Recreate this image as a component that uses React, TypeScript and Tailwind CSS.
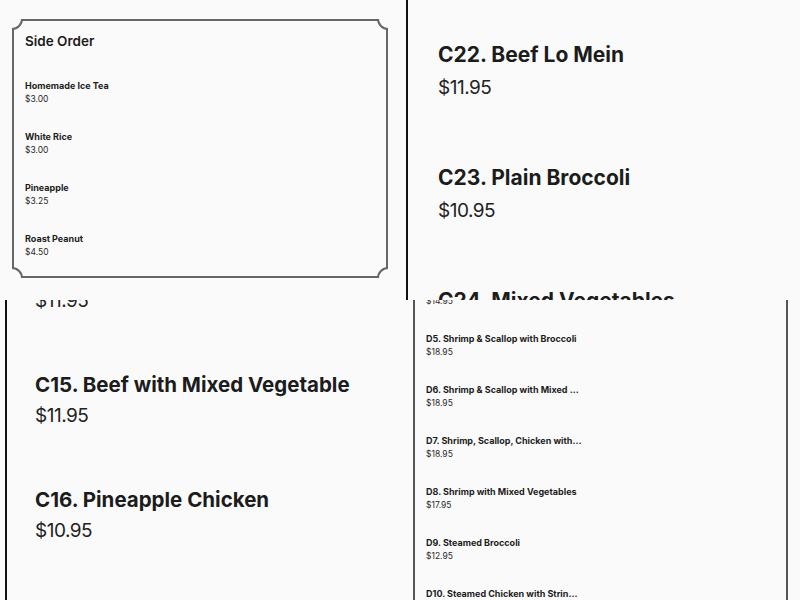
const font = { fontFamily: 'Inter, "Noto Sans", sans-serif' };

type Item = { name: string; price: string };

const sideOrder: Item[] = [
  { name: 'Homemade Ice Tea', price: '$3.00' },
  { name: 'White Rice', price: '$3.00' },
  { name: 'Pineapple', price: '$3.25' },
  { name: 'Roast Peanut', price: '$4.50' },
];

const beef: Item[] = [
  { name: 'C22. Beef Lo Mein', price: '$11.95' },
  { name: 'C23. Plain Broccoli', price: '$10.95' },
  { name: 'C24. Mixed Vegetables', price: '$10.95' },
];

const chicken: Item[] = [
  { name: 'C14. Beef with Broccoli', price: '$11.95' },
  { name: 'C15. Beef with Mixed Vegetable', price: '$11.95' },
  { name: 'C16. Pineapple Chicken', price: '$10.95' },
];

const diet: Item[] = [
  { name: 'D4. Shrimp with Broccoli', price: '$14.95' },
  { name: 'D5. Shrimp & Scallop with Broccoli', price: '$18.95' },
  { name: 'D6. Shrimp & Scallop with Mixed Vegetables', price: '$18.95' },
  { name: 'D7. Shrimp, Scallop, Chicken with Broccoli', price: '$18.95' },
  { name: 'D8. Shrimp with Mixed Vegetables', price: '$17.95' },
  { name: 'D9. Steamed Broccoli', price: '$12.95' },
  { name: 'D10. Steamed Chicken with String Beans', price: '$12.95' },
];

function Corner({ pos }: { pos: string }) {
  return (
    <div
      className={`absolute w-[22px] h-[22px] rounded-full border-2 border-[#666] bg-[#fafafa] ${pos}`}
    />
  );
}

function SideOrderTile() {
  return (
    <div className="h-[300px] overflow-hidden bg-[#fafafa] pt-[19px] pl-[12px]">
      <div className="relative w-[376px] h-[259px] overflow-hidden">
        <div className="w-full h-full border-2 border-[#666] pt-[10px] pl-[11px]">
          <h2 className="text-[13.5px] leading-[20px] font-semibold text-[#1c1c1c]">Side Order</h2>
          <div className="mt-[28px] flex flex-col">
            {sideOrder.map((it) => (
              <div key={it.name} className="h-[51px]">
                <div className="text-[9px] leading-[13px] font-bold text-[#1c1c1c]">{it.name}</div>
                <div className="text-[8.5px] leading-[14px] text-[#2a2a2a]">{it.price}</div>
              </div>
            ))}
          </div>
        </div>
        <Corner pos="-top-[11px] -left-[11px]" />
        <Corner pos="-top-[11px] -right-[11px]" />
        <Corner pos="-bottom-[11px] -left-[11px]" />
        <Corner pos="-bottom-[11px] -right-[11px]" />
      </div>
    </div>
  );
}

type BigProps = {
  items: Item[];
  lineLeft: string;
  textLeft: string;
  first: string;
  step: string;
  titleSize: string;
  priceLead: string;
};

function BigTile({ items, lineLeft, textLeft, first, step, titleSize, priceLead }: BigProps) {
  return (
    <div className={`h-[300px] overflow-hidden bg-[#fafafa] ${lineLeft}`}>
      <div className={`h-[300px] border-l-2 border-[#111] flex flex-col ${textLeft}`}>
        {items.map((it, i) => (
          <div key={it.name} className={`${step} shrink-0 ${i === 0 ? first : ''}`}>
            <div className={`${titleSize} leading-[30px] font-bold text-[#1c1c1c] whitespace-nowrap`}>{it.name}</div>
            <div className={`text-[19px] tracking-[-0.5px] text-[#222] ${priceLead}`}>{it.price}</div>
          </div>
        ))}
      </div>
    </div>
  );
}

function DietTile() {
  return (
    <div className="h-[300px] overflow-hidden bg-[#fafafa] pl-[13px]">
      <div className="w-[375px] h-[300px] border-x-2 border-[#555] pl-[11px] flex flex-col">
        {diet.map((it, i) => (
          <div key={it.name} className={`h-[51px] shrink-0 ${i === 0 ? '-mt-[19px]' : ''}`}>
            <div className="w-[156px] truncate text-[9px] leading-[13px] font-bold text-[#1c1c1c]">{it.name}</div>
            <div className="text-[8.5px] leading-[14px] text-[#2a2a2a]">{it.price}</div>
          </div>
        ))}
      </div>
    </div>
  );
}

export default function App() {
  return (
    <div style={font} className="w-[800px] h-[600px] grid grid-cols-2 grid-rows-2 bg-[#fafafa]">
      <SideOrderTile />
      <BigTile
        items={beef}
        lineLeft="pl-[6px]"
        textLeft="pl-[30px]"
        first="mt-[40px]"
        step="h-[123px]"
        titleSize="text-[21px]"
        priceLead="leading-[36px]"
      />
      <BigTile
        items={chicken}
        lineLeft="pl-[5px]"
        textLeft="pl-[28px]"
        first="-mt-[45px]"
        step="h-[115px]"
        titleSize="text-[20.5px]"
        priceLead="leading-[31px]"
      />
      <DietTile />
    </div>
  );
}
